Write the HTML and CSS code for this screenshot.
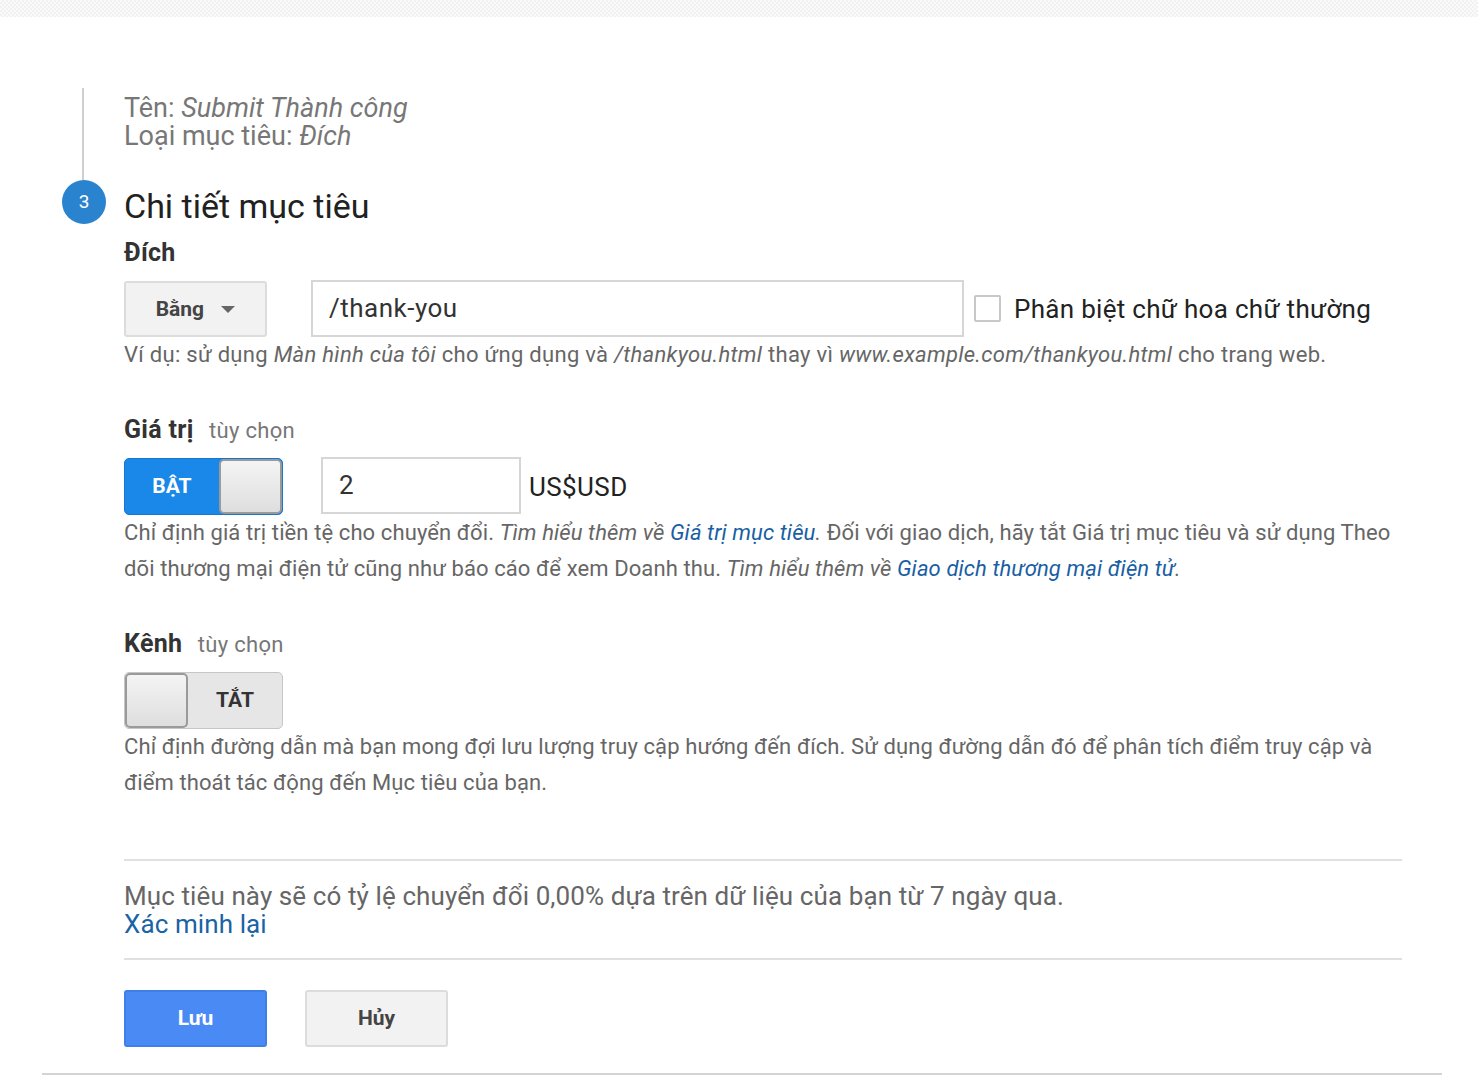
FILE: index.html
```html
<!DOCTYPE html>
<html lang="vi">
<head>
    <meta charset="UTF-8">
    <title>Chi tiết mục tiêu</title>
    <link rel="stylesheet" href="styles.css">
</head>
<body>
    <div class="topbar"></div>
    <div id="goalPanel">
        <!-- bước 2 đã xong -->
        <div class="step step-done">
            <div class="rail"><span class="rail-line"></span></div>
            <div class="summary">
                <p>Tên: <em>Submit Thành công</em></p>
                <p>Loại mục tiêu: <em>Đích</em></p>
            </div>
        </div>
        <!-- bước 3 -->
        <div class="step step-current">
            <div class="rail"><span class="badge">3</span></div>
            <div class="content">
                <h2 class="step-title">Chi tiết mục tiêu</h2>

                <div class="field">
                    <h3 class="field-label">Đích</h3>
                    <div class="field-row">
                        <a href="javascript:;" class="btn select">Bằng <span class="caret"></span></a>
                        <div class="text-input url-input">/thank-you</div>
                        <label class="check"><span class="box"></span>Phân biệt chữ hoa chữ thường</label>
                    </div>
                    <p class="hint">Ví dụ: sử dụng <em>Màn hình của tôi</em> cho ứng dụng và <em>/thankyou.html</em> thay vì <em>www.example.com/thankyou.html</em> cho trang web.</p>
                </div>

                <div class="field">
                    <h3 class="field-label">Giá trị <span class="optional">tùy chọn</span></h3>
                    <div class="field-row">
                        <div class="toggle on">
                            <span class="toggle-text">BẬT</span>
                            <span class="knob"></span>
                        </div>
                        <div class="text-input value-input">2</div>
                        <span class="currency">US$USD</span>
                    </div>
                    <p class="desc">Chỉ định giá trị tiền tệ cho chuyển đổi. <em>Tìm hiểu thêm về <a href="javascript:;">Giá trị mục tiêu</a>.</em> Đối với giao dịch, hãy tắt Giá trị mục tiêu và sử dụng Theo dõi thương mại điện tử cũng như báo cáo để xem Doanh thu. <em>Tìm hiểu thêm về <a href="javascript:;">Giao dịch thương mại điện tử</a>.</em></p>
                </div>

                <div class="field">
                    <h3 class="field-label">Kênh <span class="optional">tùy chọn</span></h3>
                    <div class="field-row">
                        <div class="toggle off">
                            <span class="knob"></span>
                            <span class="toggle-text">TẮT</span>
                        </div>
                    </div>
                    <p class="desc">Chỉ định đường dẫn mà bạn mong đợi lưu lượng truy cập hướng đến đích. Sử dụng đường dẫn đó để phân tích điểm truy cập và điểm thoát tác động đến Mục tiêu của bạn.</p>
                </div>

                <div class="verify">
                    <p>Mục tiêu này sẽ có tỷ lệ chuyển đổi 0,00% dựa trên dữ liệu của bạn từ 7 ngày qua.</p>
                    <a href="javascript:;">Xác minh lại</a>
                </div>

                <div class="actions">
                    <a href="javascript:;" class="btn btn-save">Lưu</a>
                    <a href="javascript:;" class="btn">Hủy</a>
                </div>
            </div>
        </div>
    </div>
</body>
</html>
```

FILE: styles.css
```css
* {
    margin: 0;
    padding: 0;
    box-sizing: border-box;
}

body {
    font-family: Roboto, "Noto Sans", sans-serif;
    background: #fff;
    color: #212121;
}

a {
    text-decoration: none;
}

em {
    font-style: italic;
}

.topbar {
    height: 17px;
    background: repeating-conic-gradient(#f1f1f1 0 25%, #fafafa 0 50%) 0 0 / 4px 4px;
}

#goalPanel {
    width: 1400px;
    margin-left: 42px;
    padding-top: 71px;
    border-bottom: 2px solid #d4d4d4;
}

.step {
    display: grid;
    grid-template-columns: 82px 1fr;
}

.rail {
    position: relative;
}

.rail-line {
    display: block;
    width: 2px;
    height: 100%;
    margin-left: 40px;
    background: #cfcfcf;
}

.summary {
    padding: 6px 40px 30px 0;
    font-size: 27px;
    line-height: 28px;
    color: #777;
}

.badge {
    display: block;
    width: 44px;
    height: 44px;
    margin-left: 20px;
    border-radius: 50%;
    background: #2a83cf;
    color: #fff;
    font-size: 19px;
    line-height: 44px;
    text-align: center;
}

.content {
    padding-right: 40px;
}

.step-title {
    margin-bottom: 4px;
    font-size: 34px;
    font-weight: normal;
    line-height: 52px;
    color: #212121;
}

.field {
    margin-bottom: 40px;
}

.field-label {
    font-size: 25px;
    font-weight: bold;
    line-height: 34px;
    letter-spacing: 0.3px;
    color: #333;
}

.optional {
    margin-left: 9px;
    font-size: 22px;
    font-weight: normal;
    letter-spacing: 0.3px;
    color: #777;
}

.field-row {
    display: flex;
    align-items: center;
    margin-top: 10px;
}

.btn {
    display: inline-block;
    width: 143px;
    height: 57px;
    border: 2px solid #dcdcdc;
    border-radius: 3px;
    background: #f2f2f2;
    color: #444;
    font-size: 21px;
    font-weight: bold;
    line-height: 53px;
    text-align: center;
}

.select {
    height: 56px;
    line-height: 52px;
}

.caret {
    display: inline-block;
    margin-left: 12px;
    vertical-align: middle;
    border-left: 7px solid transparent;
    border-right: 7px solid transparent;
    border-top: 7px solid #666;
}

.text-input {
    height: 57px;
    border: 2px solid #d6d6d6;
    padding-left: 16px;
    font-size: 26px;
    line-height: 53px;
    letter-spacing: 0.5px;
    color: #333;
}

.url-input {
    width: 653px;
    margin-left: 44px;
}

.check {
    display: flex;
    align-items: center;
    margin-left: 10px;
    font-size: 26px;
    letter-spacing: 0.3px;
    color: #222;
}

.check .box {
    width: 27px;
    height: 27px;
    margin-right: 13px;
    border: 2px solid #c8c8c8;
    border-radius: 2px;
    background: #fff;
}

.hint {
    font-size: 22px;
    line-height: 36px;
    letter-spacing: 0.3px;
    color: #666;
}

.toggle {
    display: flex;
    width: 159px;
    height: 57px;
    border-radius: 5px;
    overflow: hidden;
    font-size: 21px;
    font-weight: bold;
}

.toggle-text {
    flex: 1;
    line-height: 55px;
    text-align: center;
}

.knob {
    width: 63px;
    height: 100%;
    border: 2px solid #9a9a9a;
    border-radius: 5px;
    background: linear-gradient(#f4f4f4, #dedede);
}

.toggle.on {
    background: #1a88e8;
    border: 1px solid #1677d2;
    color: #fff;
}

.toggle.off {
    background: #e6e6e6;
    border: 1px solid #c6c6c6;
    color: #333;
}

.value-input {
    width: 200px;
    margin-left: 38px;
    margin-top: -3px;
}

.currency {
    margin-left: 8px;
    font-size: 26px;
    letter-spacing: 0.4px;
    color: #222;
}

.desc {
    font-size: 22px;
    line-height: 36px;
    letter-spacing: 0.1px;
    color: #666;
}

.desc a {
    color: #1a5fa3;
}

.verify {
    margin-top: 58px;
    padding: 21px 0 20px;
    border-top: 2px solid #e0e0e0;
    border-bottom: 2px solid #e0e0e0;
    font-size: 26px;
    line-height: 28px;
    letter-spacing: 0.1px;
    color: #666;
}

.verify a {
    color: #1a63a5;
}

.actions {
    display: flex;
    gap: 38px;
    padding: 30px 0 26px;
}

.btn-save {
    background: #4a8af4;
    border-color: #3f7fe8;
    color: #fff;
}
```
